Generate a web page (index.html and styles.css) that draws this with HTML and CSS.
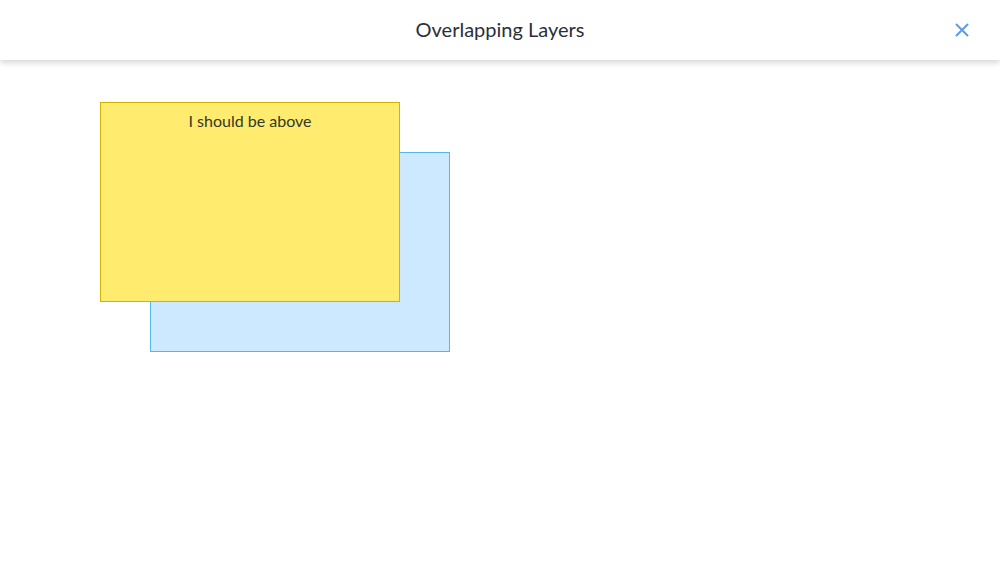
FILE: index.html
```html
<!DOCTYPE html>
<html>
<head>
<meta charset="utf-8">
<link rel="stylesheet" href="styles.css">
</head>
<body>
<header class="topbar">
  <h1 class="title">Overlapping Layers</h1>
  <button class="close" aria-label="Close">
    <svg width="14" height="14" viewBox="0 0 14 14"><path d="M1.5 1.5L12.5 12.5M12.5 1.5L1.5 12.5" stroke="#5b9cf0" stroke-width="2" stroke-linecap="round"/></svg>
  </button>
</header>
<main class="content">
  <div class="stack">
    <div class="layer layer-blue"></div>
    <div class="layer layer-yellow">I should be above</div>
  </div>
</main>
</body>
</html>
```
FILE: styles.css
```css
html, body {
  margin: 0;
  padding: 0;
  background: #fff;
  font-family: Lato, "Open Sans", sans-serif;
  color: #2a2f3a;
}
.topbar {
  position: relative;
  height: 60px;
  display: flex;
  align-items: center;
  justify-content: center;
  background: #fff;
  box-shadow: 0 2px 7px rgba(0,0,0,0.2);
  z-index: 1;
}
.title {
  margin: 0 0 2px;
  font-size: 20px;
  font-weight: 400;
  color: #2a2f3a;
}
.close {
  position: absolute;
  right: 30px;
  top: 22px;
  width: 16px;
  height: 16px;
  padding: 0;
  border: 0;
  background: none;
  display: flex;
  align-items: center;
  justify-content: center;
}
.content {
  padding: 42px 100px;
}
.stack {
  position: relative;
  width: 350px;
  height: 250px;
}
.layer {
  position: absolute;
  box-sizing: border-box;
  width: 300px;
  height: 200px;
}
.layer-blue {
  left: 50px;
  top: 50px;
  background: #cce9ff;
  border: 1px solid #5ab5ec;
}
.layer-yellow {
  left: 0;
  top: 0;
  background: #ffeb6e;
  border: 1px solid #d1b400;
  text-align: center;
  font-size: 16px;
  line-height: 20px;
  padding-top: 8px;
  color: #2e3a2a;
  z-index: 2;
}
```
